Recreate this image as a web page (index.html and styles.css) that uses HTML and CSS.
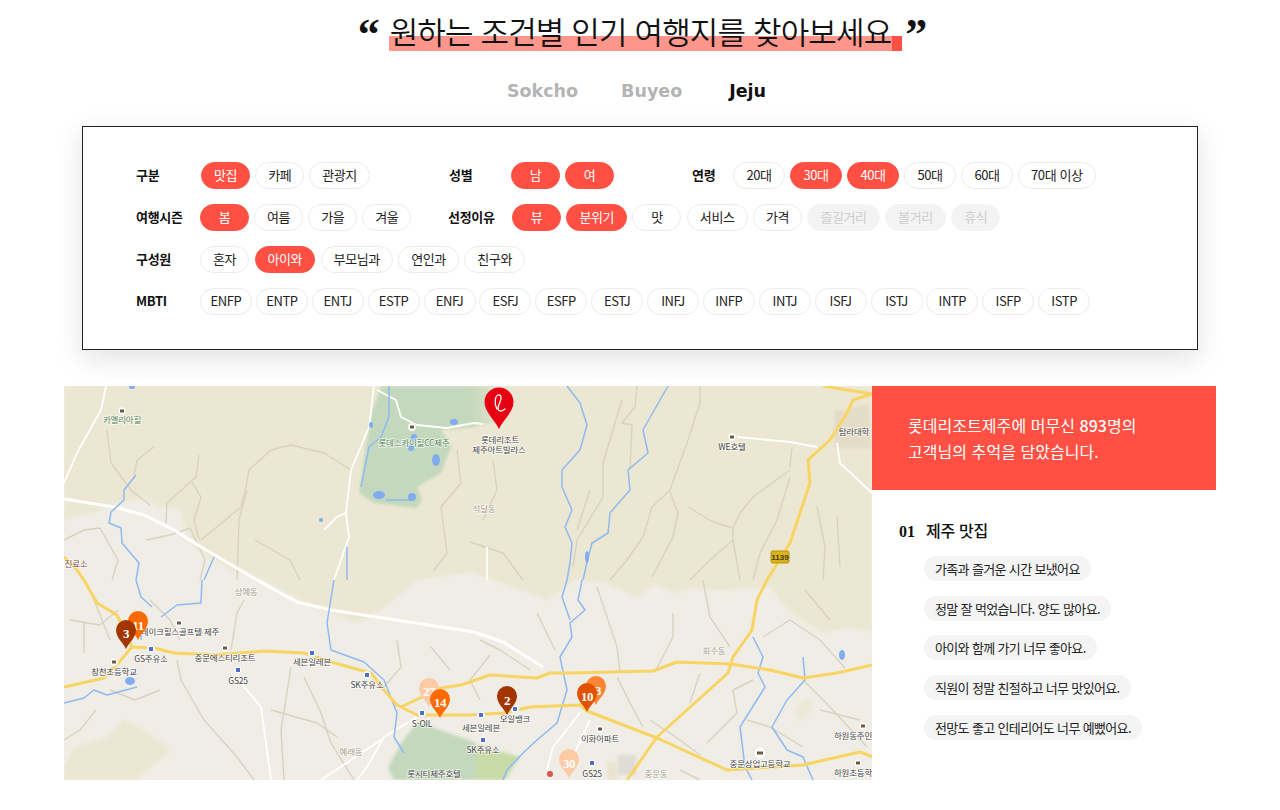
FILE: index.html
```html
<!DOCTYPE html>
<html lang="ko">
<head>
    <meta charset="UTF-8">
    <meta name="viewport" content="width=device-width, initial-scale=1.0">
    <title>Trip Finder</title>
    <link rel="stylesheet" href="styles.css">
</head>
<body>

    <!-- Title -->
    <h1 class="title">
        <span class="quote">&ldquo;</span>
        <span class="title-text">원하는 조건별 인기 여행지를 찾아보세요</span>
        <span class="quote">&rdquo;</span>
    </h1>

    <div class="tabs">
        <span class="tab">Sokcho</span>
        <span class="tab">Buyeo</span>
        <span class="tab active">Jeju</span>
    </div>

    <!-- Filters -->
    <div class="filters">
        <div class="filter-row">
            <div class="filter-group group-kind">
                <span class="filter-label">구분</span>
                <span class="pill on">맛집</span><span class="pill">카페</span><span class="pill">관광지</span>
            </div>
            <div class="filter-group group-gender">
                <span class="filter-label">성별</span>
                <span class="pill on">남</span><span class="pill on">여</span>
            </div>
            <div class="filter-group">
                <span class="filter-label label-short">연령</span>
                <span class="pill age">20대</span><span class="pill age on">30대</span><span class="pill age on">40대</span><span class="pill age">50대</span><span class="pill age">60대</span><span class="pill">70대 이상</span>
            </div>
        </div>
        <div class="filter-row">
            <div class="filter-group group-season">
                <span class="filter-label">여행시즌</span>
                <span class="pill on">봄</span><span class="pill">여름</span><span class="pill">가을</span><span class="pill">겨울</span>
            </div>
            <div class="filter-group group-wide">
                <span class="filter-label">선정이유</span>
                <span class="pill on">뷰</span><span class="pill on">분위기</span><span class="pill">맛</span><span class="pill">서비스</span><span class="pill">가격</span><span class="pill off">즐길거리</span><span class="pill off">볼거리</span><span class="pill off">휴식</span>
            </div>
        </div>
        <div class="filter-row">
            <div class="filter-group group-wide">
                <span class="filter-label">구성원</span>
                <span class="pill">혼자</span><span class="pill on">아이와</span><span class="pill">부모님과</span><span class="pill">연인과</span><span class="pill">친구와</span>
            </div>
        </div>
        <div class="filter-row">
            <div class="filter-group">
                <span class="filter-label">MBTI</span>
                <span class="pill mbti">ENFP</span><span class="pill mbti">ENTP</span><span class="pill mbti">ENTJ</span><span class="pill mbti">ESTP</span><span class="pill mbti">ENFJ</span><span class="pill mbti">ESFJ</span><span class="pill mbti">ESFP</span><span class="pill mbti">ESTJ</span><span class="pill mbti">INFJ</span><span class="pill mbti">INFP</span><span class="pill mbti">INTJ</span><span class="pill mbti">ISFJ</span><span class="pill mbti">ISTJ</span><span class="pill mbti">INTP</span><span class="pill mbti">ISFP</span><span class="pill mbti">ISTP</span>
            </div>
        </div>
    </div>

    <div class="result">
        <!-- Map, viewBox uses page coordinates -->
        <svg class="map" viewBox="64 386 808 394" xmlns="http://www.w3.org/2000/svg">
            <defs>
                <linearGradient id="greenFade" x1="0" x2="1" y1="0" y2="0">
                    <stop offset="0.72" stop-color="#c3d8bc"/>
                    <stop offset="1" stop-color="#c3d8bc" stop-opacity="0"/>
                </linearGradient>
            </defs>

            <rect x="64" y="386" width="808" height="394" fill="#f0ede6"/>

            <!-- terrain -->
            <g class="terrain">
                <path fill="#ece7d2" d="M64 386H872V632L845 628 823 633 790 613 770 587 727 590 693 589 677 593 653 585 637 597 603 582 575 580 547 600 513 587 470 572 417 580 381 610 357 623 304 603 264 580 231 570 197 550 184 527 181 510 160 507 144 498 107 505 94 513 64 520Z"/>
                <path fill="#ece7d2" d="M64 780V767L74 747 107 737 124 720 144 730 171 750 151 767 137 780Z"/>
                <path fill="#ebe8d6" d="M795 710Q803 696 812 700 812 716 800 722Z"/>
                <path fill="url(#greenFade)" d="M381 386L372 413 367 440 361 480 359 493 374 503 417 508 422 500 417 487 441 473 451 447 441 430 474 427 512 418 512 386Z"/>
                <path fill="#c3d8bc" d="M417 722L474 742 505 780H394L388 768 400 745Z"/>
                <path fill="#c8dba7" d="M477 745L520 757 505 780H476Z"/>
                <path fill="#dedcd5" d="M618 755H636V775H618Z"/>
                <path fill="#e9e3cf" d="M607 762H617V780H607Z"/>
                <path fill="#e3dcc6" d="M835 410L846 410 868 404 872 448H834Z"/>
            </g>

            <!-- minor roads -->
            <g class="road-minor">
                <path d="M154 447L137 460 134 475M107 430L111 463 131 490 150 505"/>
                <path d="M199 455L196 477 167 503 166 523M192 482L201 497 194 520 199 540"/>
                <path d="M291 445L271 450 249 470 246 487 241 507 201 540M291 445L324 453 351 470"/>
                <path d="M247 490L239 520 237 580M457 450L461 483 441 507 447 553 434 570"/>
                <path d="M622 400L615 423 603 463 603 497 577 540 573 567M590 490L577 530"/>
                <path d="M700 386V403L687 443 670 490 652 507 643 537 627 560 610 580"/>
                <path d="M670 492L678 513 673 537 652 577M637 386L635 407 622 423 632 425 630 470"/>
                <path d="M688 507L713 522 733 528 733 540 710 560 690 580M733 540L740 580"/>
                <path d="M790 470L753 497 740 513 733 528M792 447L790 467M790 477L777 520 760 553 753 580"/>
                <path d="M817 507L825 547 823 580M837 517L840 567"/>
                <path d="M493 460L497 490 483 520M470 542L503 553 523 580"/>
                <path d="M64 540L84 530 100 528 118 560 112 580M146 540L170 535 190 528 205 560 200 580M255 540L290 560 300 580"/>
                <path d="M177 660L181 680 204 720 237 757 254 780M231 650L237 613 244 600"/>
                <path d="M291 667L281 730 284 780M304 677L321 713 331 743 354 780"/>
                <path d="M271 710L317 723 337 737M397 640L401 667 384 687M431 647L450 670"/>
                <path d="M84 623V653M90 590L110 640M70 620L100 625 118 610M150 600L170 620 180 640"/>
                <path d="M160 690L135 700 110 690M96 710L80 730 64 740"/>
                <path d="M537 613L555 650M597 587L617 647 620 672M673 613V637L655 672M703 580L710 617 730 647"/>
                <path d="M763 637L790 620 820 640 845 668M803 680L830 707 867 747M747 720L770 727 803 747"/>
                <path d="M617 677L630 703 643 727M700 673L690 703M753 680L733 690 737 713 707 743"/>
                <path d="M480 640L500 650 530 670M480 700L470 680 490 655"/>
                <path d="M805 590L830 620M650 720L680 740 700 755M820 710L860 720M680 770L700 780"/>
            </g>

            <!-- white roads -->
            <g class="road-white">
                <path class="wide" d="M64 499L114 507 144 515 174 530 201 547 257 580 297 602 331 610 474 632 503 642 543 667"/>
                <path d="M106 386L101 410 77 453 64 483"/>
                <path d="M374 386L369 427 351 470 346 513 349 537 334 580M324 530L337 517 346 513"/>
                <path d="M377 390L396 400 401 417 417 425 447 428 474 423 483 424"/>
                <path d="M737 437L790 442 817 447M837 443L840 463 872 493"/>
                <path d="M487 547V580"/>
                <path d="M417 717L384 737 367 767 357 780M321 780L381 740"/>
                <path d="M241 683L261 707 271 780M580 713L553 747 547 770M590 720L570 763"/>
            </g>

            <!-- water -->
            <g class="water">
                <path d="M567 386L580 403 587 425 580 450 562 470V487L572 510 565 527 572 543 570 563 567 580 562 597 570 620"/>
                <path d="M668 386L660 400 643 430 648 453 628 470 630 490 610 513 608 533 592 543 587 562 583 580"/>
                <path d="M582 580L578 600 585 610 570 623 572 637 560 657 567 690 557 723 537 740 523 753 507 770 503 780"/>
                <path d="M753 637L763 657 758 673 765 687 740 727 745 767 752 780M803 657L805 680 787 700 772 727 787 750 803 757 813 780"/>
                <path d="M136 475L124 490V500L111 512 109 523 121 528 122 543 139 563 136 580 141 597 152 607M141 615V640"/>
                <path d="M64 703L84 698 94 690 107 695 137 687"/>
                <path d="M202 580L201 603 177 605 161 617M214 557L204 580M347 547V580"/>
                <path d="M334 580L327 623 331 650 364 662 384 680 397 713 394 737 404 753"/>
                <path d="M389 386V417L381 437 369 447 361 487M386 500L412 500"/>
                <ellipse cx="379" cy="495" rx="6" ry="4"/>
                <ellipse cx="412" cy="497" rx="4" ry="4"/>
                <ellipse cx="436" cy="460" rx="4" ry="6"/>
                <ellipse cx="454" cy="422" rx="4" ry="3"/>
                <ellipse cx="414" cy="437" rx="3" ry="3"/>
                <ellipse cx="411" cy="448" rx="3" ry="3"/>
                <ellipse cx="371" cy="425" rx="2" ry="3"/>
                <ellipse cx="132" cy="387" rx="3" ry="2"/>
                <ellipse cx="321" cy="520" rx="2" ry="2"/>
                <ellipse cx="842" cy="655" rx="3" ry="5"/>
                <ellipse cx="130" cy="681" rx="5" ry="4"/>
                <ellipse cx="587" cy="557" rx="2" ry="6"/>
            </g>

            <!-- highways -->
            <g class="road-main">
                <path d="M64 687L104 678 121 660 132 647 154 648 174 653 214 655 264 651 304 653 331 662 371 673 384 690 397 705 417 715H470L503 713 530 707 580 705 587 711 657 738 727 770 803 765 860 752 873 757"/>
                <path d="M64 557L77 570 84 580 97 603 117 615 132 647"/>
                <path d="M401 707L441 688 461 685 490 675 537 678 550 673 570 673 653 671 677 662 730 664 770 670 803 678 837 673 872 665"/>
                <path d="M823 386L872 394 853 400 847 413 830 440 808 460 810 483 790 543 767 580 757 600 752 630 733 657 728 673 657 737 627 780"/>
            </g>

            <!-- highway badge -->
            <rect class="badge" x="771" y="551" width="18" height="12" rx="1.5"/>
            <text class="badge-text" x="780" y="560">1139</text>

            <!-- points of interest -->
            <g class="poi">
                <circle cx="122" cy="411" r="4"/><circle cx="412" cy="427" r="4"/><circle cx="732" cy="437" r="4"/>
                <circle cx="179" cy="623" r="4"/><circle cx="225" cy="648" r="4"/><circle cx="114" cy="662" r="4"/>
                <circle cx="600" cy="729" r="4"/><circle cx="760" cy="753" r="6"/><circle cx="863" cy="726" r="4"/><circle cx="858" cy="763" r="4"/>
                <circle cx="151" cy="649" r="4"/><circle cx="238" cy="670" r="4"/><circle cx="312" cy="653" r="4"/>
                <circle cx="367" cy="675" r="4"/><circle cx="422" cy="713" r="4"/><circle cx="515" cy="709" r="4"/>
                <circle cx="481" cy="715" r="4"/><circle cx="483" cy="740" r="4"/><circle cx="592" cy="763" r="4"/>
            </g>
            <path class="poi-dark" d="M120 409.500h4v3h-4zM410 425.500h4v3h-4zM730 435.500h4v3h-4zM177 621.500h4v3h-4zM223 646.500h4v3h-4zM112 660.500h4v3h-4zM598 727.500h4v3h-4zM757 751.500h6v3h-6zM861 724.500h4v3h-4zM856 761.500h4v3h-4z"/>
            <path class="poi-blue" d="M149 647h4v4h-4zM236 668h4v4h-4zM310 651h4v4h-4zM365 673h4v4h-4zM420 711h4v4h-4zM513 707h4v4h-4zM479 713h4v4h-4zM481 738h4v4h-4zM590 761h4v4h-4z"/>
            <circle cx="550" cy="774" r="3" fill="#d9534f"/>

            <!-- labels -->
            <g class="label label-green">
                <text x="122" y="423">카멜리아힐</text>
                <text x="414" y="446">롯데스카이힐CC제주</text>
            </g>
            <g class="label label-place">
                <text x="484" y="512">석달동</text>
                <text x="246" y="595">상예동</text>
                <text x="351" y="755">예래동</text>
                <text x="714" y="654">회수동</text>
                <text x="76" y="567" class="label-brown">진료소</text>
                <text x="656" y="777">중문동</text>
            </g>
            <g class="label">
                <text x="500" y="443">롯데리조트</text>
                <text x="499" y="453">제주아트빌라스</text>
                <text x="732" y="450">WE호텔</text>
                <text x="854" y="435">탐라대학</text>
                <text x="180" y="635">레이크힐스골프텔 제주</text>
                <text x="151" y="662">GS주유소</text>
                <text x="225" y="661">중문에스티리조트</text>
                <text x="312" y="665">세븐일레븐</text>
                <text x="238" y="684">GS25</text>
                <text x="114" y="675">창천초등학교</text>
                <text x="367" y="688">SK주유소</text>
                <text x="422" y="727">S-OIL</text>
                <text x="481" y="731">세븐일레븐</text>
                <text x="515" y="722">오일뱅크</text>
                <text x="483" y="753">SK주유소</text>
                <text x="600" y="742">이화아파트</text>
                <text x="760" y="767">중문상업고등학교</text>
                <text x="853" y="739">하원동주민</text>
                <text x="853" y="776">하원초등학</text>
                <text x="592" y="777">GS25</text>
                <text x="434" y="777">롯시티제주호텔</text>
            </g>

            <!-- resort pin -->
            <path fill="#e60012" d="M499 429C495 420 484.500 412 484.500 402A14.500 14.500 0 0 1 513.500 402C513.500 412 503 420 499 429Z"/>
            <path class="pin-logo" d="M497 409C494 404 495 396 498 395 501 394 502 398 500 402 498 406 497 410 500 411 502 411.500 503 410.500 505 409"/>

            <!-- rank pins -->
            <g class="marker" transform="translate(138 640)">
                <path fill="#ff6a00" d="M0 0C-3 -7 -10 -11 -10 -19A10 10 0 0 1 10 -19C10 -11 3 -7 0 0Z"/>
                <text y="-10.500">11</text>
            </g>
            <g class="marker" transform="translate(126 649)">
                <path fill="#a33600" d="M0 0C-3 -7 -10 -11 -10 -19A10 10 0 0 1 10 -19C10 -11 3 -7 0 0Z"/>
                <text y="-11">3</text>
            </g>
            <g class="marker" transform="translate(429 707)">
                <path fill="#fccba5" d="M0 0C-3 -7 -10 -11 -10 -19A10 10 0 0 1 10 -19C10 -11 3 -7 0 0Z"/>
                <text y="-11">27</text>
            </g>
            <g class="marker" transform="translate(440 718)">
                <path fill="#ff6a00" d="M0 0C-3 -7 -10 -11 -10 -19A10 10 0 0 1 10 -19C10 -11 3 -7 0 0Z"/>
                <text y="-11">14</text>
            </g>
            <g class="marker" transform="translate(507 715)">
                <path fill="#a33600" d="M0 0C-3 -7 -10 -11 -10 -19A10 10 0 0 1 10 -19C10 -11 3 -7 0 0Z"/>
                <text y="-10">2</text>
            </g>
            <g class="marker" transform="translate(596 705)">
                <path fill="#ff8533" d="M0 0C-3 -7 -10 -11 -10 -19A10 10 0 0 1 10 -19C10 -11 3 -7 0 0Z"/>
                <text x="2" y="-10">3</text>
            </g>
            <g class="marker" transform="translate(587 712)">
                <path fill="#e05200" d="M0 0C-3 -7 -10 -11 -10 -19A10 10 0 0 1 10 -19C10 -11 3 -7 0 0Z"/>
                <text y="-11">10</text>
            </g>
            <g class="marker" transform="translate(569 778)">
                <path fill="#fccba5" d="M0 0C-3 -7 -10 -11 -10 -19A10 10 0 0 1 10 -19C10 -11 3 -7 0 0Z"/>
                <text y="-10">30</text>
            </g>
        </svg>

        <!-- Side panel -->
        <div class="side">
            <div class="side-head">
                <p>롯데리조트제주에 머무신 <b>893</b>명의</p>
                <p>고객님의 추억을 담았습니다.</p>
            </div>
            <div class="side-body">
                <h3 class="rank-title"><span class="rank-no">01</span>제주 맛집</h3>
                <ul class="comments">
                    <li>가족과 즐거운 시간 보냈어요</li>
                    <li>정말 잘 먹었습니다. 양도 많아요.</li>
                    <li>아이와 함께 가기 너무 좋아요.</li>
                    <li>직원이 정말 친절하고 너무 맛있어요.</li>
                    <li>전망도 좋고 인테리어도 너무 예뻤어요.</li>
                </ul>
            </div>
        </div>
    </div>

</body>
</html>
```

FILE: styles.css
```css
* {
    box-sizing: border-box;
}

body {
    margin: 0;
    font-family: "Noto Sans CJK KR", "Noto Sans", sans-serif;
    color: #111;
    background-color: #fff;
}

/* title */
.title {
    display: flex;
    justify-content: center;
    align-items: flex-start;
    height: 51px;
    margin: 0;
    padding: 11px 0 0 5px;
    font-weight: 350;
    font-size: 31px;
    line-height: 40px;
}

.title-text {
    height: 40px;
    padding: 0 11px 0 1px;
    margin: 0 3px 0 9px;
    letter-spacing: -0.85px;
    background: linear-gradient(to right, #ff968c calc(100% - 10px), #ff5043 0) no-repeat left bottom / 100% 15px;
}

.quote {
    font-family: "Liberation Serif", serif;
    font-weight: 700;
    font-size: 44px;
    line-height: 50px;
    margin-top: -1px;
}

.tabs {
    display: flex;
    justify-content: center;
    gap: 43px;
    margin-top: 27px;
    padding-right: 7px;
    font-family: "DejaVu Sans", sans-serif;
    font-weight: 700;
    font-size: 17.5px;
    line-height: 26px;
}

.tab {
    color: #b4b4b4;
}

.tab.active {
    margin-left: 4px;
    color: #111;
}

/* filter box */
.filters {
    width: 1116px;
    height: 224px;
    margin: 22px 0 0 82px;
    padding: 35px 53px 0;
    border: 1px solid #222;
    background-color: #fff;
    box-shadow: 0 8px 28px rgba(0, 0, 0, 0.12);
}

.filter-row {
    display: flex;
    height: 26.5px;
    margin-bottom: 15.5px;
}

.filter-group {
    display: flex;
    align-items: center;
    gap: 5px;
}

.group-wide {
    gap: 5.4px;
}

.group-kind {
    width: 313px;
}

.group-kind .filter-label {
    width: 60px;
}

.group-season {
    width: 312px;
}

.group-gender {
    width: 243px;
}

.group-gender .filter-label {
    width: 57px;
}

.filter-label {
    width: 59px;
    padding-bottom: 2px;
    font-size: 13px;
    font-weight: 700;
    letter-spacing: -0.3px;
}

.group-wide .filter-label {
    width: 58.6px;
}

.label-short {
    width: 36px;
}

.pill {
    min-width: 49px;
    height: 26.5px;
    padding: 0 12px;
    border: 1px solid #ebebeb;
    border-radius: 14px;
    font-size: 13px;
    line-height: 24px;
    text-align: center;
    white-space: nowrap;
    color: #222;
    letter-spacing: -0.4px;
}

.pill.age {
    min-width: 52px;
}

.pill.on {
    background-color: #ff5043;
    border-color: #ff5043;
    color: #fff;
}

.pill.off {
    background-color: #f3f3f3;
    border-color: #f3f3f3;
    color: #cdcdcd;
}

.pill.mbti {
    width: 52px;
    padding: 0;
    margin-right: -1.13px;
}

/* map + side panel */
.result {
    display: flex;
    width: 1152px;
    margin: 36px 0 0 64px;
}

.map {
    display: block;
    width: 808px;
    height: 394px;
    flex: none;
}

.terrain {
    filter: blur(1.5px);
}

.road-minor {
    filter: blur(0.4px);
}

.road-minor path {
    fill: none;
    stroke: #d8d2c1;
    stroke-width: 1.4;
    stroke-linejoin: round;
}

.road-white {
    filter: blur(0.3px);
}

.road-white path {
    fill: none;
    stroke: #fff;
    stroke-width: 1.8;
    stroke-linejoin: round;
}

.road-white .wide {
    stroke-width: 3;
}

.road-main path {
    fill: none;
    stroke: #f8d462;
    stroke-width: 3;
    stroke-linejoin: round;
}

.water {
    filter: blur(0.3px);
}

.water path {
    fill: none;
    stroke: #8dbaf2;
    stroke-width: 1.5;
    stroke-linejoin: round;
}

.water ellipse {
    fill: #7fadf0;
}

.badge {
    fill: #d9b21c;
    stroke: #b8960f;
}

.badge-text {
    font-family: "Liberation Sans", sans-serif;
    font-size: 8px;
    font-weight: 700;
    fill: #4a3c00;
    text-anchor: middle;
}

.poi circle {
    fill: #fff;
    stroke: #e3dfd2;
    stroke-width: 0.5;
}

.poi-dark {
    fill: #6b5a45;
}

.poi-blue {
    fill: #4a6fd0;
}

.label text {
    font-size: 8.5px;
    letter-spacing: -0.2px;
    text-anchor: middle;
    fill: #444;
    stroke: #fff;
    stroke-width: 1.5px;
    stroke-opacity: 0.75;
    paint-order: stroke;
}

.label-green text {
    fill: #4f8450;
}

.label-place text {
    fill: #a59b88;
}

.label-place .label-brown {
    fill: #7a4c3a;
}

.pin-logo {
    fill: none;
    stroke: #fff;
    stroke-width: 1.3;
    stroke-linecap: round;
}

.marker text {
    font-family: "Liberation Serif", serif;
    font-weight: 700;
    font-size: 13px;
    fill: #fff;
    text-anchor: middle;
    letter-spacing: -0.5px;
}

.side {
    flex: 1;
}

.side-head {
    height: 104px;
    padding: 26px 36px 0;
    background-color: #ff5043;
    color: #fff;
    font-size: 16px;
    line-height: 26px;
    letter-spacing: 0.05px;
}

.side-head p {
    margin: 0;
}

.side-head b {
    font-weight: 500;
}

.side-body {
    padding: 27px 0 0 27px;
}

.rank-title {
    margin: 0;
    font-size: 16px;
    font-weight: 500;
    line-height: 26px;
    letter-spacing: -0.3px;
}

.rank-no {
    display: inline-block;
    width: 27px;
    font-family: "Liberation Serif", serif;
    font-weight: 700;
    letter-spacing: 0;
}

.comments {
    list-style: none;
    margin: 11px 0 0 25px;
    padding: 0;
}

.comments li {
    width: fit-content;
    height: 25px;
    margin-bottom: 14.7px;
    padding: 0 11px;
    border-radius: 13px;
    background-color: #f4f4f4;
    font-size: 13px;
    line-height: 25px;
    letter-spacing: -0.65px;
    color: #222;
}
```
